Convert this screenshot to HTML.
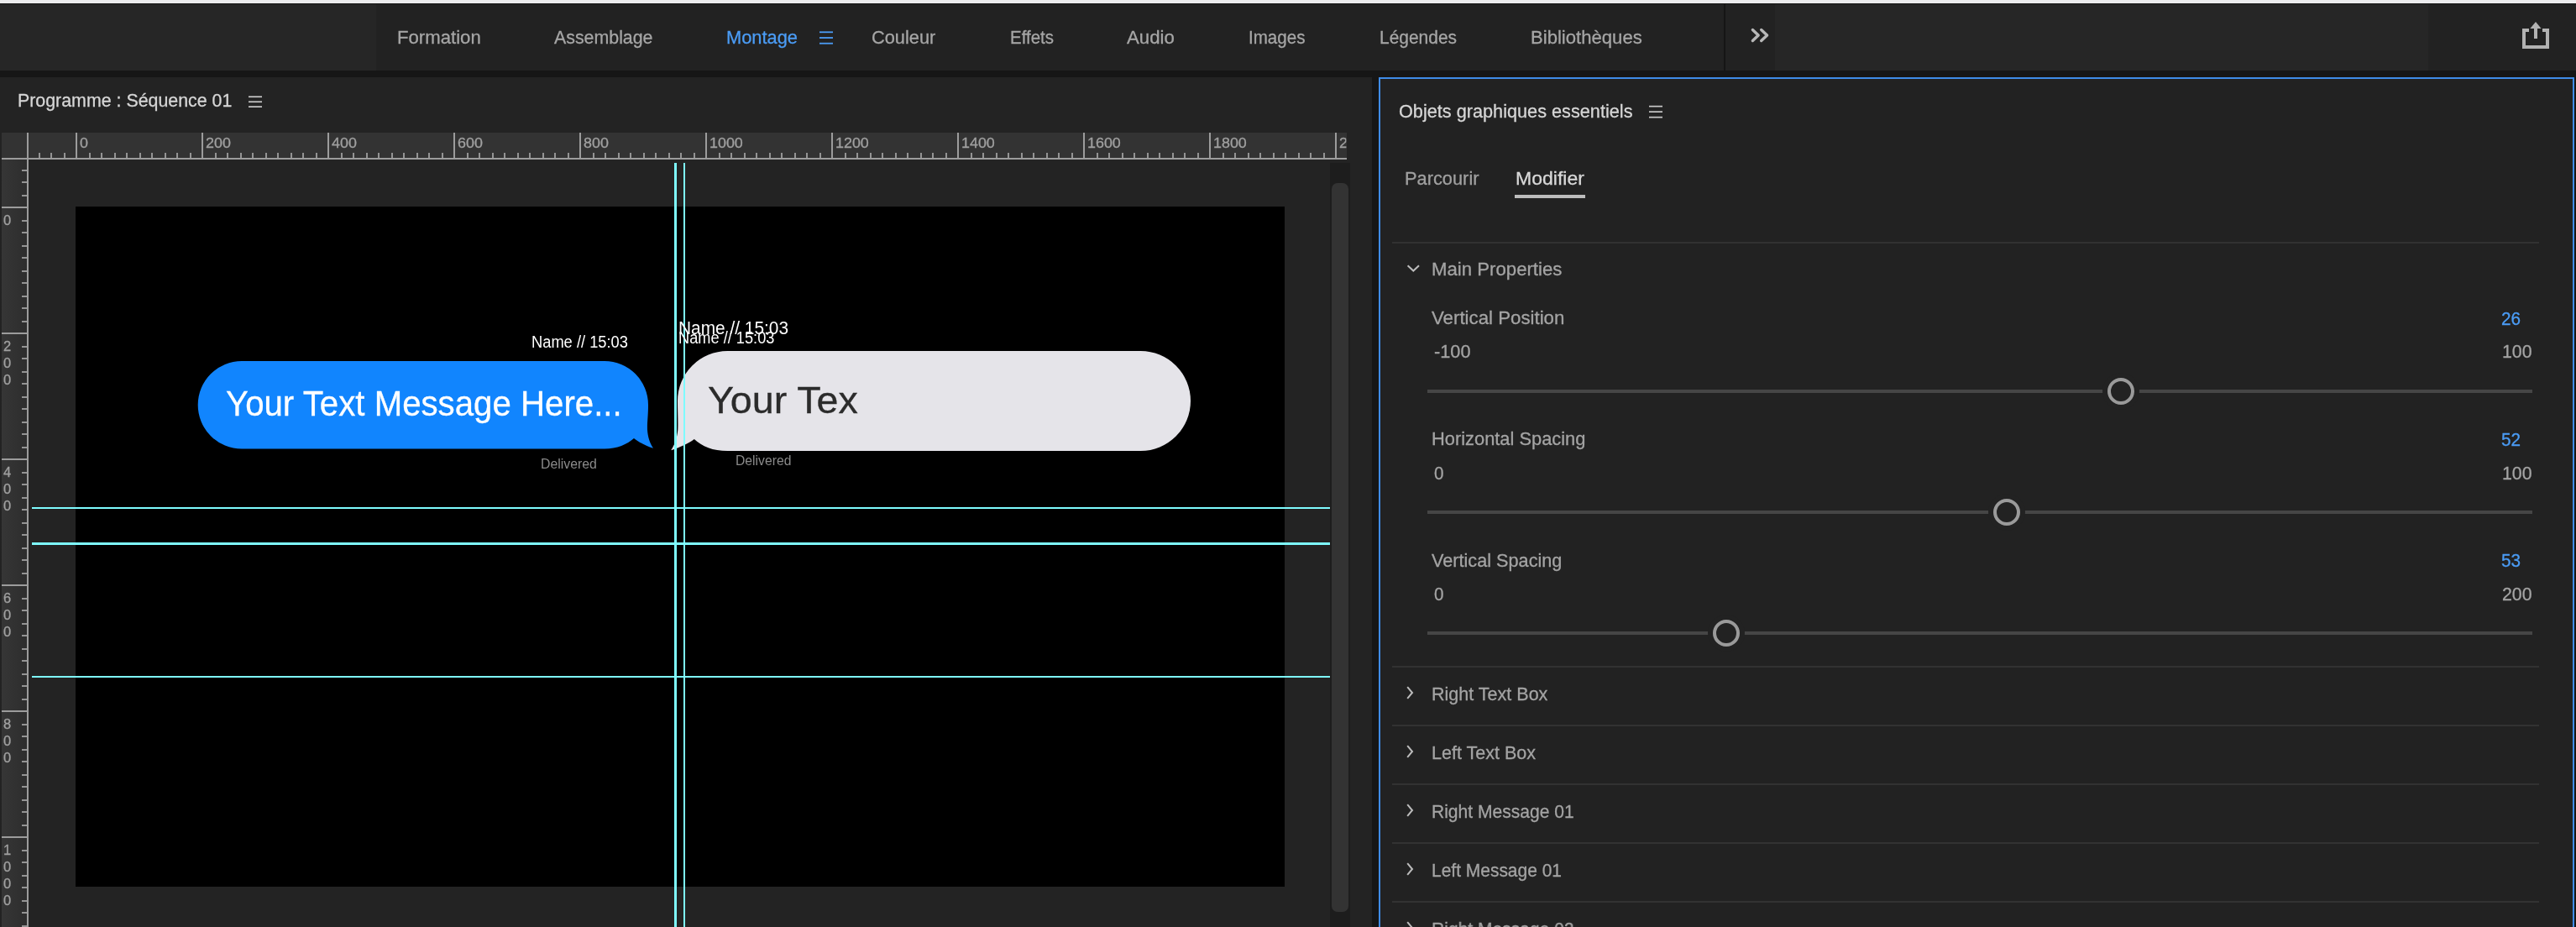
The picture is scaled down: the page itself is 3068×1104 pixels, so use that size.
<!DOCTYPE html>
<html lang="fr">
<head>
<meta charset="utf-8">
<title>Premiere Pro – Objets graphiques essentiels</title>
<style>
html,body{margin:0;padding:0}
body{width:3068px;height:1104px;overflow:hidden;background:#161616;position:relative;font-family:"Liberation Sans",sans-serif}
.a{position:absolute}
.t{-webkit-text-stroke:0.3px currentColor;position:absolute;white-space:pre;line-height:1;transform-origin:0 0;font-family:"Liberation Sans",sans-serif}
#strip{left:0;top:0;width:3068px;height:4px;background:#ececee}
#hdr{left:0;top:4px;width:3068px;height:80px;background:#222222}
#hdrL{left:0;top:4px;width:448px;height:80px;background:#262626}
#hdrSep{left:2053px;top:4px;width:2px;height:80px;background:#151515}
#hdrR{left:2114px;top:4px;width:778px;height:80px;background:#262626}
#lp{left:0;top:92px;width:1634px;height:1012px;background:#232323}
#rp{left:1642px;top:92px;width:1420px;height:1012px;background:#222222;border:2px solid #3f8ce8;border-bottom:none}
.sep{position:absolute;left:1658px;width:1366px;height:2px;background:#323232}
.trk{position:absolute;left:1700px;width:1316px;height:4px;background:#464646}
.knob{position:absolute;width:24px;height:24px;border:4px solid #9a9a9a;border-radius:50%;background:#222222;box-shadow:0 0 0 6px #222222}
.hb{position:absolute;height:2px;background:#d0d0d0}
svg{position:absolute;left:0;top:0}
</style>
</head>
<body>
<div id="strip" class="a"></div>
<div id="hdr" class="a"></div>
<div id="hdrL" class="a"></div>
<div id="hdrSep" class="a"></div>
<div id="hdrR" class="a"></div>
<div class="a" style="left:0;top:4px;width:3068px;height:1px;background:#141414"></div>
<div id="lp" class="a"></div>
<div id="rp" class="a"></div>

<!-- right panel separators / sliders -->
<div class="sep" style="top:288px"></div>
<div class="sep" style="top:793px"></div>
<div class="sep" style="top:863px"></div>
<div class="sep" style="top:933px"></div>
<div class="sep" style="top:1003px"></div>
<div class="sep" style="top:1073px"></div>
<div class="trk" style="top:464px"></div>
<div class="trk" style="top:608px"></div>
<div class="trk" style="top:752px"></div>
<div class="knob" style="left:2510px;top:450px"></div>
<div class="knob" style="left:2374px;top:594px"></div>
<div class="knob" style="left:2040px;top:738px"></div>
<div class="a" style="left:1804px;top:232px;width:84px;height:4px;background:#bcbcbc"></div>

<svg width="3068" height="1104" viewBox="0 0 3068 1104">
<!-- rulers -->
<rect x="2" y="158" width="1602" height="30" fill="#333333"/>
<rect x="2" y="188" width="1602" height="2" fill="#9c9c9c"/>
<rect x="46" y="182" width="2" height="6" fill="#949494"/>
<rect x="60" y="182" width="2" height="6" fill="#949494"/>
<rect x="76" y="182" width="2" height="6" fill="#949494"/>
<rect x="90" y="158" width="2" height="30" fill="#9c9c9c"/>
<rect x="106" y="182" width="2" height="6" fill="#949494"/>
<rect x="120" y="182" width="2" height="6" fill="#949494"/>
<rect x="136" y="182" width="2" height="6" fill="#949494"/>
<rect x="150" y="182" width="2" height="6" fill="#949494"/>
<rect x="166" y="182" width="2" height="6" fill="#949494"/>
<rect x="180" y="182" width="2" height="6" fill="#949494"/>
<rect x="196" y="182" width="2" height="6" fill="#949494"/>
<rect x="210" y="182" width="2" height="6" fill="#949494"/>
<rect x="226" y="182" width="2" height="6" fill="#949494"/>
<rect x="240" y="158" width="2" height="30" fill="#9c9c9c"/>
<rect x="256" y="182" width="2" height="6" fill="#949494"/>
<rect x="270" y="182" width="2" height="6" fill="#949494"/>
<rect x="286" y="182" width="2" height="6" fill="#949494"/>
<rect x="300" y="182" width="2" height="6" fill="#949494"/>
<rect x="316" y="182" width="2" height="6" fill="#949494"/>
<rect x="330" y="182" width="2" height="6" fill="#949494"/>
<rect x="346" y="182" width="2" height="6" fill="#949494"/>
<rect x="360" y="182" width="2" height="6" fill="#949494"/>
<rect x="376" y="182" width="2" height="6" fill="#949494"/>
<rect x="390" y="158" width="2" height="30" fill="#9c9c9c"/>
<rect x="406" y="182" width="2" height="6" fill="#949494"/>
<rect x="420" y="182" width="2" height="6" fill="#949494"/>
<rect x="436" y="182" width="2" height="6" fill="#949494"/>
<rect x="450" y="182" width="2" height="6" fill="#949494"/>
<rect x="466" y="182" width="2" height="6" fill="#949494"/>
<rect x="480" y="182" width="2" height="6" fill="#949494"/>
<rect x="496" y="182" width="2" height="6" fill="#949494"/>
<rect x="510" y="182" width="2" height="6" fill="#949494"/>
<rect x="526" y="182" width="2" height="6" fill="#949494"/>
<rect x="540" y="158" width="2" height="30" fill="#9c9c9c"/>
<rect x="556" y="182" width="2" height="6" fill="#949494"/>
<rect x="570" y="182" width="2" height="6" fill="#949494"/>
<rect x="586" y="182" width="2" height="6" fill="#949494"/>
<rect x="600" y="182" width="2" height="6" fill="#949494"/>
<rect x="616" y="182" width="2" height="6" fill="#949494"/>
<rect x="630" y="182" width="2" height="6" fill="#949494"/>
<rect x="646" y="182" width="2" height="6" fill="#949494"/>
<rect x="660" y="182" width="2" height="6" fill="#949494"/>
<rect x="676" y="182" width="2" height="6" fill="#949494"/>
<rect x="690" y="158" width="2" height="30" fill="#9c9c9c"/>
<rect x="706" y="182" width="2" height="6" fill="#949494"/>
<rect x="720" y="182" width="2" height="6" fill="#949494"/>
<rect x="736" y="182" width="2" height="6" fill="#949494"/>
<rect x="750" y="182" width="2" height="6" fill="#949494"/>
<rect x="766" y="182" width="2" height="6" fill="#949494"/>
<rect x="780" y="182" width="2" height="6" fill="#949494"/>
<rect x="796" y="182" width="2" height="6" fill="#949494"/>
<rect x="810" y="182" width="2" height="6" fill="#949494"/>
<rect x="826" y="182" width="2" height="6" fill="#949494"/>
<rect x="840" y="158" width="2" height="30" fill="#9c9c9c"/>
<rect x="856" y="182" width="2" height="6" fill="#949494"/>
<rect x="870" y="182" width="2" height="6" fill="#949494"/>
<rect x="886" y="182" width="2" height="6" fill="#949494"/>
<rect x="900" y="182" width="2" height="6" fill="#949494"/>
<rect x="916" y="182" width="2" height="6" fill="#949494"/>
<rect x="930" y="182" width="2" height="6" fill="#949494"/>
<rect x="946" y="182" width="2" height="6" fill="#949494"/>
<rect x="960" y="182" width="2" height="6" fill="#949494"/>
<rect x="976" y="182" width="2" height="6" fill="#949494"/>
<rect x="990" y="158" width="2" height="30" fill="#9c9c9c"/>
<rect x="1006" y="182" width="2" height="6" fill="#949494"/>
<rect x="1020" y="182" width="2" height="6" fill="#949494"/>
<rect x="1036" y="182" width="2" height="6" fill="#949494"/>
<rect x="1050" y="182" width="2" height="6" fill="#949494"/>
<rect x="1066" y="182" width="2" height="6" fill="#949494"/>
<rect x="1080" y="182" width="2" height="6" fill="#949494"/>
<rect x="1096" y="182" width="2" height="6" fill="#949494"/>
<rect x="1110" y="182" width="2" height="6" fill="#949494"/>
<rect x="1126" y="182" width="2" height="6" fill="#949494"/>
<rect x="1140" y="158" width="2" height="30" fill="#9c9c9c"/>
<rect x="1156" y="182" width="2" height="6" fill="#949494"/>
<rect x="1170" y="182" width="2" height="6" fill="#949494"/>
<rect x="1186" y="182" width="2" height="6" fill="#949494"/>
<rect x="1200" y="182" width="2" height="6" fill="#949494"/>
<rect x="1216" y="182" width="2" height="6" fill="#949494"/>
<rect x="1230" y="182" width="2" height="6" fill="#949494"/>
<rect x="1246" y="182" width="2" height="6" fill="#949494"/>
<rect x="1260" y="182" width="2" height="6" fill="#949494"/>
<rect x="1276" y="182" width="2" height="6" fill="#949494"/>
<rect x="1290" y="158" width="2" height="30" fill="#9c9c9c"/>
<rect x="1306" y="182" width="2" height="6" fill="#949494"/>
<rect x="1320" y="182" width="2" height="6" fill="#949494"/>
<rect x="1336" y="182" width="2" height="6" fill="#949494"/>
<rect x="1350" y="182" width="2" height="6" fill="#949494"/>
<rect x="1366" y="182" width="2" height="6" fill="#949494"/>
<rect x="1380" y="182" width="2" height="6" fill="#949494"/>
<rect x="1396" y="182" width="2" height="6" fill="#949494"/>
<rect x="1410" y="182" width="2" height="6" fill="#949494"/>
<rect x="1426" y="182" width="2" height="6" fill="#949494"/>
<rect x="1440" y="158" width="2" height="30" fill="#9c9c9c"/>
<rect x="1456" y="182" width="2" height="6" fill="#949494"/>
<rect x="1470" y="182" width="2" height="6" fill="#949494"/>
<rect x="1486" y="182" width="2" height="6" fill="#949494"/>
<rect x="1500" y="182" width="2" height="6" fill="#949494"/>
<rect x="1516" y="182" width="2" height="6" fill="#949494"/>
<rect x="1530" y="182" width="2" height="6" fill="#949494"/>
<rect x="1546" y="182" width="2" height="6" fill="#949494"/>
<rect x="1560" y="182" width="2" height="6" fill="#949494"/>
<rect x="1576" y="182" width="2" height="6" fill="#949494"/>
<rect x="1590" y="158" width="2" height="30" fill="#9c9c9c"/>
<defs><linearGradient id="vr" x1="0" y1="0" x2="1" y2="0"><stop offset="0" stop-color="#363636"/><stop offset="1" stop-color="#2d2d2d"/></linearGradient></defs>
<rect x="2" y="190" width="30" height="914" fill="url(#vr)"/>
<rect x="32" y="158" width="2" height="946" fill="#9c9c9c"/>
<rect x="26" y="202" width="6" height="2" fill="#949494"/>
<rect x="26" y="216" width="6" height="2" fill="#949494"/>
<rect x="26" y="232" width="6" height="2" fill="#949494"/>
<rect x="2" y="246" width="30" height="2" fill="#9c9c9c"/>
<rect x="26" y="262" width="6" height="2" fill="#949494"/>
<rect x="26" y="276" width="6" height="2" fill="#949494"/>
<rect x="26" y="292" width="6" height="2" fill="#949494"/>
<rect x="26" y="306" width="6" height="2" fill="#949494"/>
<rect x="26" y="322" width="6" height="2" fill="#949494"/>
<rect x="26" y="336" width="6" height="2" fill="#949494"/>
<rect x="26" y="352" width="6" height="2" fill="#949494"/>
<rect x="26" y="366" width="6" height="2" fill="#949494"/>
<rect x="26" y="382" width="6" height="2" fill="#949494"/>
<rect x="2" y="396" width="30" height="2" fill="#9c9c9c"/>
<rect x="26" y="412" width="6" height="2" fill="#949494"/>
<rect x="26" y="426" width="6" height="2" fill="#949494"/>
<rect x="26" y="442" width="6" height="2" fill="#949494"/>
<rect x="26" y="456" width="6" height="2" fill="#949494"/>
<rect x="26" y="472" width="6" height="2" fill="#949494"/>
<rect x="26" y="486" width="6" height="2" fill="#949494"/>
<rect x="26" y="502" width="6" height="2" fill="#949494"/>
<rect x="26" y="516" width="6" height="2" fill="#949494"/>
<rect x="26" y="532" width="6" height="2" fill="#949494"/>
<rect x="2" y="546" width="30" height="2" fill="#9c9c9c"/>
<rect x="26" y="562" width="6" height="2" fill="#949494"/>
<rect x="26" y="576" width="6" height="2" fill="#949494"/>
<rect x="26" y="592" width="6" height="2" fill="#949494"/>
<rect x="26" y="606" width="6" height="2" fill="#949494"/>
<rect x="26" y="622" width="6" height="2" fill="#949494"/>
<rect x="26" y="636" width="6" height="2" fill="#949494"/>
<rect x="26" y="652" width="6" height="2" fill="#949494"/>
<rect x="26" y="666" width="6" height="2" fill="#949494"/>
<rect x="26" y="682" width="6" height="2" fill="#949494"/>
<rect x="2" y="696" width="30" height="2" fill="#9c9c9c"/>
<rect x="26" y="712" width="6" height="2" fill="#949494"/>
<rect x="26" y="726" width="6" height="2" fill="#949494"/>
<rect x="26" y="742" width="6" height="2" fill="#949494"/>
<rect x="26" y="756" width="6" height="2" fill="#949494"/>
<rect x="26" y="772" width="6" height="2" fill="#949494"/>
<rect x="26" y="786" width="6" height="2" fill="#949494"/>
<rect x="26" y="802" width="6" height="2" fill="#949494"/>
<rect x="26" y="816" width="6" height="2" fill="#949494"/>
<rect x="26" y="832" width="6" height="2" fill="#949494"/>
<rect x="2" y="846" width="30" height="2" fill="#9c9c9c"/>
<rect x="26" y="862" width="6" height="2" fill="#949494"/>
<rect x="26" y="876" width="6" height="2" fill="#949494"/>
<rect x="26" y="892" width="6" height="2" fill="#949494"/>
<rect x="26" y="906" width="6" height="2" fill="#949494"/>
<rect x="26" y="922" width="6" height="2" fill="#949494"/>
<rect x="26" y="936" width="6" height="2" fill="#949494"/>
<rect x="26" y="952" width="6" height="2" fill="#949494"/>
<rect x="26" y="966" width="6" height="2" fill="#949494"/>
<rect x="26" y="982" width="6" height="2" fill="#949494"/>
<rect x="2" y="996" width="30" height="2" fill="#9c9c9c"/>
<rect x="26" y="1012" width="6" height="2" fill="#949494"/>
<rect x="26" y="1026" width="6" height="2" fill="#949494"/>
<rect x="26" y="1042" width="6" height="2" fill="#949494"/>
<rect x="26" y="1056" width="6" height="2" fill="#949494"/>
<rect x="26" y="1072" width="6" height="2" fill="#949494"/>
<rect x="26" y="1086" width="6" height="2" fill="#949494"/>
<rect x="26" y="1102" width="6" height="2" fill="#949494"/>
<rect x="2" y="158" width="30" height="30" fill="#333333"/>
<!-- canvas -->
<rect x="90" y="246" width="1440" height="810" fill="#000000"/>
<!-- scrollbar -->
<rect x="1584" y="194" width="24" height="910" fill="#1d1d1d"/>
<rect x="1586" y="218" width="20" height="868" rx="7" fill="#333333"/>
<!-- bubbles -->
<path d="M288 430 H720 A52 52.3 0 0 1 772 482.3 C772 495 770.6 504 771 512 C771.5 520 774 528 778 533.8 C770 531.5 761 527 755 522 C747 529 735 534.6 720 534.6 H288 A52.3 52.3 0 0 1 288 430 Z" fill="#1185fe"/>
<path d="M866.5 418 H1358.5 A59.5 59.5 0 0 1 1358.5 537 H866.5 C849 537 836 531.5 826.8 522.9 C820 528 810 532.5 799.2 536.3 C803.5 530 806.5 521 807.3 512 C807.8 503 807 490 807 477.5 A59.5 59.5 0 0 1 866.5 418 Z" fill="#e5e4e9"/>
<!-- guides -->
<g fill="#7efbff">
<rect x="38" y="604" width="1546" height="2"/>
<rect x="38" y="646" width="1546" height="3"/>
<rect x="38" y="805" width="1546" height="2"/>
<rect x="803" y="194" width="3" height="910"/>
<rect x="814" y="194" width="2" height="910"/>
</g>
<!-- hamburger icons -->
<g fill="#4b9cf5"><rect x="976" y="37.4" width="16" height="1.8"/><rect x="976" y="44.1" width="16" height="1.8"/><rect x="976" y="50.8" width="16" height="1.8"/></g>
<g fill="#c8c8c8"><rect x="296" y="114.4" width="16" height="1.7"/><rect x="296" y="120.4" width="16" height="1.7"/><rect x="296" y="126.3" width="16" height="1.7"/></g>
<g fill="#c8c8c8"><rect x="1964" y="125.8" width="16" height="1.7"/><rect x="1964" y="132.3" width="16" height="1.7"/><rect x="1964" y="138.8" width="16" height="1.7"/></g>
<!-- chevrons -->
<g fill="none" stroke="#b8b8b8" stroke-width="3.4" stroke-linejoin="round" stroke-linecap="round">
<path d="M2087.4 35.5 L2094.2 42 L2087.4 48.5"/>
<path d="M2097.7 35.5 L2104.6 42 L2097.7 48.5"/>
</g>
<g fill="none" stroke="#bcbcbc" stroke-width="2" stroke-linecap="butt" stroke-linejoin="miter">
<path d="M1676.6 316.3 L1683.3 322.6 L1690 316.3"/>
<path d="M1676.2 818.2 L1682 825 L1676.2 831.8"/>
<path d="M1676.2 888.2 L1682 895 L1676.2 901.8"/>
<path d="M1676.2 958.2 L1682 965 L1676.2 971.8"/>
<path d="M1676.2 1028.2 L1682 1035 L1676.2 1041.8"/>
<path d="M1676.2 1098.2 L1682 1105 L1676.2 1111.8"/>
</g>
<!-- export icon -->
<g fill="#b2b2b2">
<path d="M3004 34 H3012 V38 H3008 V54 H3032 V38 H3028 V34 H3036 V58 H3004 Z"/>
<rect x="3018" y="33" width="4" height="13"/>
<path d="M3020 26 L3026.6 34 H3013.4 Z"/>
</g>
</svg>

<div id="txt" style="position:absolute;left:0;top:0;width:3068px;height:1104px;will-change:transform">
<span class="t" style="left:472.75px;top:32.78px;font-size:22.7px;color:#a6a6a6;transform:scaleX(0.9766)">Formation</span>
<span class="t" style="left:660.00px;top:32.78px;font-size:22.7px;color:#a6a6a6;transform:scaleX(0.9411)">Assemblage</span>
<span class="t" style="left:865.00px;top:32.78px;font-size:22.7px;color:#4b9cf5;transform:scaleX(0.9627)">Montage</span>
<span class="t" style="left:1038.25px;top:32.78px;font-size:22.7px;color:#a6a6a6;transform:scaleX(0.9597)">Couleur</span>
<span class="t" style="left:1203.00px;top:32.78px;font-size:22.7px;color:#a6a6a6;transform:scaleX(0.9029)">Effets</span>
<span class="t" style="left:1342.00px;top:32.78px;font-size:22.7px;color:#a6a6a6;transform:scaleX(0.9779)">Audio</span>
<span class="t" style="left:1487.00px;top:32.78px;font-size:22.7px;color:#a6a6a6;transform:scaleX(0.9072)">Images</span>
<span class="t" style="left:1642.50px;top:32.78px;font-size:22.7px;color:#a6a6a6;transform:scaleX(0.9230)">Légendes</span>
<span class="t" style="left:1823.00px;top:32.78px;font-size:22.7px;color:#a6a6a6;transform:scaleX(0.9744)">Bibliothèques</span>
<span class="t" style="left:20.70px;top:109.18px;font-size:22px;color:#d6d6d6;transform:scaleX(0.9710)">Programme : Séquence 01</span>
<span class="t" style="left:1666.00px;top:121.98px;font-size:22px;color:#d6d6d6;transform:scaleX(0.9858)">Objets graphiques essentiels</span>
<span class="t" style="left:1672.50px;top:202.25px;font-size:22.5px;color:#a0a0a0;transform:scaleX(0.9695)">Parcourir</span>
<span class="t" style="left:1804.50px;top:202.25px;font-size:22.5px;color:#d8d8d8;transform:scaleX(1.0234)">Modifier</span>
<span class="t" style="left:1704.60px;top:309.65px;font-size:22.5px;color:#a4a4a4;transform:scaleX(0.9862)">Main Properties</span>
<span class="t" style="left:1704.60px;top:368.35px;font-size:22.5px;color:#a4a4a4;transform:scaleX(0.9894)">Vertical Position</span>
<span class="t" style="left:1708.00px;top:408.38px;font-size:22px;color:#a4a4a4;transform:scaleX(0.9876)">-100</span>
<span class="t" style="left:2978.50px;top:368.78px;font-size:22px;color:#4b9cf5;transform:scaleX(0.9435)">26</span>
<span class="t" style="left:2979.70px;top:408.38px;font-size:22px;color:#a4a4a4;transform:scaleX(0.9695)">100</span>
<span class="t" style="left:1704.60px;top:512.45px;font-size:22.5px;color:#a4a4a4;transform:scaleX(0.9711)">Horizontal Spacing</span>
<span class="t" style="left:1708.00px;top:552.68px;font-size:22px;color:#a4a4a4;transform:scaleX(0.9388)">0</span>
<span class="t" style="left:2978.50px;top:512.88px;font-size:22px;color:#4b9cf5;transform:scaleX(0.9435)">52</span>
<span class="t" style="left:2979.70px;top:552.68px;font-size:22px;color:#a4a4a4;transform:scaleX(0.9695)">100</span>
<span class="t" style="left:1704.60px;top:656.65px;font-size:22.5px;color:#a4a4a4;transform:scaleX(0.9631)">Vertical Spacing</span>
<span class="t" style="left:1708.00px;top:696.78px;font-size:22px;color:#a4a4a4;transform:scaleX(0.9388)">0</span>
<span class="t" style="left:2978.50px;top:657.08px;font-size:22px;color:#4b9cf5;transform:scaleX(0.9435)">53</span>
<span class="t" style="left:2979.70px;top:696.78px;font-size:22px;color:#a4a4a4;transform:scaleX(0.9695)">200</span>
<span class="t" style="left:1705.00px;top:816.15px;font-size:22.5px;color:#a4a4a4;transform:scaleX(0.9566)">Right Text Box</span>
<span class="t" style="left:1705.00px;top:885.95px;font-size:22.5px;color:#a4a4a4;transform:scaleX(0.9563)">Left Text Box</span>
<span class="t" style="left:1705.00px;top:956.15px;font-size:22.5px;color:#a4a4a4;transform:scaleX(0.9352)">Right Message 01</span>
<span class="t" style="left:1705.00px;top:1025.95px;font-size:22.5px;color:#a4a4a4;transform:scaleX(0.9317)">Left Message 01</span>
<span class="t" style="left:1705.00px;top:1095.95px;font-size:22.5px;color:#a4a4a4;transform:scaleX(0.9352)">Right Message 02</span>
<span class="t" style="left:268.80px;top:460.11px;font-size:42.4px;color:#ffffff;transform:scaleX(0.9487)">Your Text Message Here...</span>
<span class="t" style="left:633.20px;top:397.99px;font-size:19.5px;color:#ffffff;transform:scaleX(0.9381);-webkit-text-stroke:0">Name // 15:03</span>
<span class="t" style="left:643.50px;top:544.41px;font-size:17px;color:#8a8a8a;transform:scaleX(0.9316);-webkit-text-stroke:0">Delivered</span>
<span class="t" style="left:842.80px;top:453.51px;font-size:45px;color:#2b2b2b;transform:scaleX(1.0357)">Your Tex</span>
<span class="t" style="left:808.30px;top:380.28px;font-size:22px;color:#ffffff;transform:scaleX(0.9480);-webkit-text-stroke:0">Name // 15:03</span>
<span class="t" style="left:808.30px;top:392.89px;font-size:19.5px;color:#ffffff;transform:scaleX(0.9340);-webkit-text-stroke:0">Name // 15:03</span>
<span class="t" style="left:876.30px;top:540.41px;font-size:17px;color:#8a8a8a;transform:scaleX(0.9246);-webkit-text-stroke:0">Delivered</span>
<span class="t" style="left:95.00px;top:161.81px;font-size:17px;color:#a0a0a0;transform:scaleX(1.0508)">0</span>
<span class="t" style="left:245.00px;top:161.81px;font-size:17px;color:#a0a0a0;transform:scaleX(1.0520)">200</span>
<span class="t" style="left:395.00px;top:161.81px;font-size:17px;color:#a0a0a0;transform:scaleX(1.0520)">400</span>
<span class="t" style="left:545.00px;top:161.81px;font-size:17px;color:#a0a0a0;transform:scaleX(1.0520)">600</span>
<span class="t" style="left:695.00px;top:161.81px;font-size:17px;color:#a0a0a0;transform:scaleX(1.0520)">800</span>
<span class="t" style="left:845.00px;top:161.81px;font-size:17px;color:#a0a0a0;transform:scaleX(1.0521)">1000</span>
<span class="t" style="left:995.00px;top:161.81px;font-size:17px;color:#a0a0a0;transform:scaleX(1.0521)">1200</span>
<span class="t" style="left:1145.00px;top:161.81px;font-size:17px;color:#a0a0a0;transform:scaleX(1.0521)">1400</span>
<span class="t" style="left:1295.00px;top:161.81px;font-size:17px;color:#a0a0a0;transform:scaleX(1.0521)">1600</span>
<span class="t" style="left:1445.00px;top:161.81px;font-size:17px;color:#a0a0a0;transform:scaleX(1.0521)">1800</span>
<span class="t" style="left:1594.70px;top:161.81px;font-size:17px;color:#a0a0a0;transform:scaleX(1.0455);width:8px;overflow:hidden">2</span>
<span class="t" style="left:4.20px;top:254.01px;font-size:17px;color:#a0a0a0;transform:scaleX(0.9716)">0</span>
<span class="t" style="left:4.20px;top:404.01px;font-size:17px;color:#a0a0a0;transform:scaleX(0.9716)">2</span>
<span class="t" style="left:4.20px;top:424.11px;font-size:17px;color:#a0a0a0;transform:scaleX(0.9716)">0</span>
<span class="t" style="left:4.20px;top:444.21px;font-size:17px;color:#a0a0a0;transform:scaleX(0.9716)">0</span>
<span class="t" style="left:4.20px;top:554.01px;font-size:17px;color:#a0a0a0;transform:scaleX(0.9716)">4</span>
<span class="t" style="left:4.20px;top:574.11px;font-size:17px;color:#a0a0a0;transform:scaleX(0.9716)">0</span>
<span class="t" style="left:4.20px;top:594.21px;font-size:17px;color:#a0a0a0;transform:scaleX(0.9716)">0</span>
<span class="t" style="left:4.20px;top:704.01px;font-size:17px;color:#a0a0a0;transform:scaleX(0.9716)">6</span>
<span class="t" style="left:4.20px;top:724.11px;font-size:17px;color:#a0a0a0;transform:scaleX(0.9716)">0</span>
<span class="t" style="left:4.20px;top:744.21px;font-size:17px;color:#a0a0a0;transform:scaleX(0.9716)">0</span>
<span class="t" style="left:4.20px;top:854.01px;font-size:17px;color:#a0a0a0;transform:scaleX(0.9716)">8</span>
<span class="t" style="left:4.20px;top:874.11px;font-size:17px;color:#a0a0a0;transform:scaleX(0.9716)">0</span>
<span class="t" style="left:4.20px;top:894.21px;font-size:17px;color:#a0a0a0;transform:scaleX(0.9716)">0</span>
<span class="t" style="left:4.20px;top:1004.01px;font-size:17px;color:#a0a0a0;transform:scaleX(0.9716)">1</span>
<span class="t" style="left:4.20px;top:1024.11px;font-size:17px;color:#a0a0a0;transform:scaleX(0.9716)">0</span>
<span class="t" style="left:4.20px;top:1044.21px;font-size:17px;color:#a0a0a0;transform:scaleX(0.9716)">0</span>
<span class="t" style="left:4.20px;top:1064.31px;font-size:17px;color:#a0a0a0;transform:scaleX(0.9716)">0</span>
</div>
</body>
</html>
